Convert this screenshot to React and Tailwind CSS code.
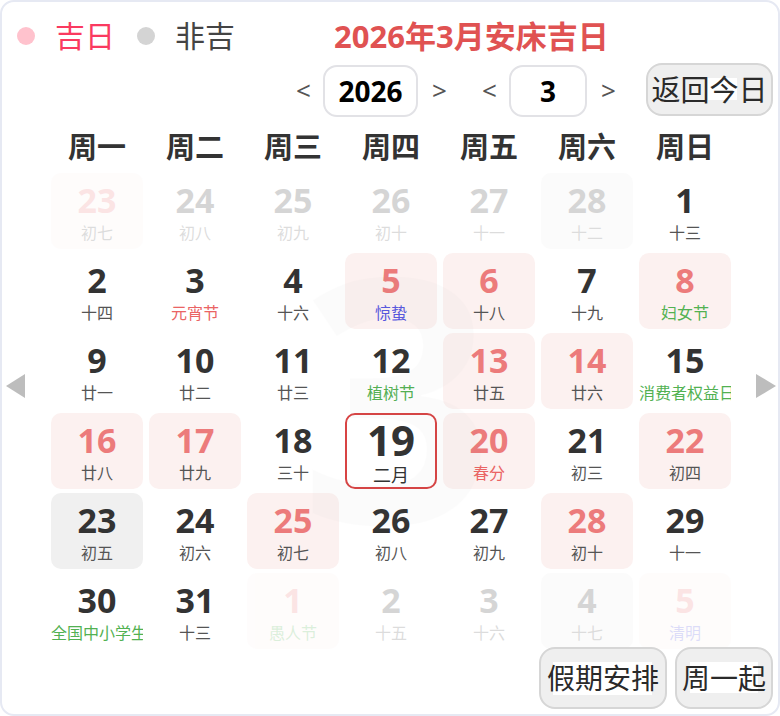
import React from "react";

const L = "lucky";
const G = "grey";

const rows = [
  [
    { d: 23, t: "初七", bg: L, o: true },
    { d: 24, t: "初八", o: true },
    { d: 25, t: "初九", o: true },
    { d: 26, t: "初十", o: true },
    { d: 27, t: "十一", o: true },
    { d: 28, t: "十二", bg: G, o: true },
    { d: 1, t: "十三" },
  ],
  [
    { d: 2, t: "十四" },
    { d: 3, t: "元宵节", c: "red" },
    { d: 4, t: "十六" },
    { d: 5, t: "惊蛰", c: "purple", bg: L },
    { d: 6, t: "十八", bg: L },
    { d: 7, t: "十九" },
    { d: 8, t: "妇女节", c: "green", bg: L },
  ],
  [
    { d: 9, t: "廿一" },
    { d: 10, t: "廿二" },
    { d: 11, t: "廿三" },
    { d: 12, t: "植树节", c: "green" },
    { d: 13, t: "廿五", bg: L },
    { d: 14, t: "廿六", bg: L },
    { d: 15, t: "消费者权益日", c: "green" },
  ],
  [
    { d: 16, t: "廿八", bg: L },
    { d: 17, t: "廿九", bg: L },
    { d: 18, t: "三十" },
    { d: 19, t: "二月", today: true },
    { d: 20, t: "春分", c: "red", bg: L },
    { d: 21, t: "初三" },
    { d: 22, t: "初四", bg: L },
  ],
  [
    { d: 23, t: "初五", bg: "sel" },
    { d: 24, t: "初六" },
    { d: 25, t: "初七", bg: L },
    { d: 26, t: "初八" },
    { d: 27, t: "初九" },
    { d: 28, t: "初十", bg: L },
    { d: 29, t: "十一" },
  ],
  [
    { d: 30, t: "全国中小学生安全教育日", c: "green" },
    { d: 31, t: "十三" },
    { d: 1, t: "愚人节", c: "green", bg: L, o: true },
    { d: 2, t: "十五", o: true },
    { d: 3, t: "十六", o: true },
    { d: 4, t: "十七", bg: G, o: true },
    { d: 5, t: "清明", c: "purple", bg: L, o: true },
  ],
];

const weekdays = ["周一", "周二", "周三", "周四", "周五", "周六", "周日"];

function Cell({ cell }) {
  const bgCls =
    cell.bg === L
      ? "bg-[#fcf1f0]"
      : cell.bg === G
      ? "bg-[#ececec]"
      : cell.bg === "sel"
      ? "bg-[#f0f0f0]"
      : "";
  const numCls = cell.bg === L ? "text-[#ec7b7b]" : "text-[#333333]";
  const lunarCls =
    cell.c === "green"
      ? "text-[#52b152]"
      : cell.c === "purple"
      ? "text-[#5757df]"
      : cell.c === "red"
      ? "text-[#ea6464]"
      : "text-[#555555]";

  if (cell.today) {
    return (
      <div className="h-[76px] rounded-[10px] border-2 border-[#d84444] flex flex-col items-center overflow-hidden">
        <div className="h-[44px] leading-[44px] mt-[3px] text-[42px] font-bold text-[#333333]">
          {cell.d}
        </div>
        <div className="h-[22px] leading-[22px] mt-[2px] text-[18px] text-[#333333]">
          {cell.t}
        </div>
      </div>
    );
  }

  return (
    <div
      className={`h-[76px] rounded-[10px] flex flex-col items-center overflow-hidden ${bgCls} ${
        cell.o ? "opacity-[0.2]" : ""
      }`}
    >
      <div className={`h-[36px] leading-[36px] mt-[9px] text-[34px] font-bold ${numCls}`}>
        {cell.d}
      </div>
      <div
        className={`w-full h-[20px] leading-[20px] mt-[5px] text-[16px] whitespace-nowrap overflow-hidden text-center ${lunarCls}`}
      >
        {cell.t}
      </div>
    </div>
  );
}

function GreyButton({ children, className, patch }) {
  return (
    <div
      className={`relative flex items-center justify-center bg-[#efefef] border-2 border-[#d6d6d6] rounded-[16px] text-[#2a2a2a] ${className}`}
    >
      <span className={`absolute bg-white ${patch}`} />
      <span className="relative">{children}</span>
    </div>
  );
}

export default function App() {
  return (
    <div
      className="w-[780px] h-[716px] bg-white relative overflow-hidden rounded-[14px] border-2 border-[#e6e9f3]"
      style={{ fontFamily: '"Noto Sans", "Noto Sans CJK SC", sans-serif' }}
    >
      <div className="relative flex flex-col">
        {/* legend + title */}
        <div className="flex items-center h-[40px] mt-[14px] pl-[15px]">
          <span className="w-[18px] h-[18px] rounded-full bg-[#ffc2cd]" />
          <span className="ml-[20px] text-[30px] leading-[40px] text-[#fa3a60]">吉日</span>
          <span className="ml-[22px] w-[18px] h-[18px] rounded-full bg-[#d4d4d4]" />
          <span className="ml-[20px] text-[30px] leading-[40px] text-[#444444]">非吉</span>
          <span className="ml-[99px] text-[31px] leading-[40px] font-bold text-[#e05252]">
            2026年3月安床吉日
          </span>
        </div>

        {/* year / month selector */}
        <div className="flex items-center h-[53px] mt-[7px] pl-[294px]">
          <span className="w-[14px] text-center text-[26px] text-[#555555] leading-none">&lt;</span>
          <div className="ml-[13px] w-[95px] h-[52px] mt-[3px] rounded-[14px] border-2 border-[#e2e2e6] flex items-center justify-center text-[28px] font-bold text-black">
            2026
          </div>
          <span className="ml-[14px] w-[14px] text-center text-[26px] text-[#555555] leading-none">&gt;</span>
          <span className="ml-[36px] w-[14px] text-center text-[26px] text-[#555555] leading-none">&lt;</span>
          <div className="ml-[13px] w-[78px] h-[52px] mt-[3px] rounded-[14px] border-2 border-[#e2e2e6] flex items-center justify-center text-[28px] font-bold text-black">
            3
          </div>
          <span className="ml-[14px] w-[14px] text-center text-[26px] text-[#555555] leading-none">&gt;</span>
          <GreyButton
            className="ml-[31px] w-[127px] h-[53px] text-[29px]"
            patch="left-[60px] right-[34px] top-[13px] bottom-[14px]"
          >
            返回今日
          </GreyButton>
        </div>

        {/* weekday header */}
        <div className="grid grid-cols-[repeat(7,92px)] gap-x-[6px] ml-[49px] mt-[11px] h-[40px]">
          {weekdays.map((w) => (
            <div key={w} className="text-center text-[29px] leading-[40px] font-bold text-[#333333]">
              {w}
            </div>
          ))}
        </div>

        {/* calendar grid */}
        <div className="grid grid-cols-[repeat(7,92px)] gap-x-[6px] gap-y-[4px] ml-[49px] mt-[6px]">
          {rows.flat().map((cell, i) => (
            <Cell key={i} cell={cell} />
          ))}
        </div>

        {/* bottom buttons */}
        <div className="flex justify-end gap-[8px] pr-[5px] mt-[-2px]">
          <GreyButton
            className="w-[128px] h-[62px] text-[28px]"
            patch="left-[12px] right-[13px] top-[13px] bottom-[12px]"
          >
            假期安排
          </GreyButton>
          <GreyButton
            className="w-[98px] h-[62px] text-[28px]"
            patch="left-[13px] right-[13px] top-[13px] bottom-[14px]"
          >
            周一起
          </GreyButton>
        </div>
      </div>

      {/* watermark */}
      <div className="absolute left-[300px] top-[180px] w-[190px] h-[420px] flex items-center justify-center pointer-events-none text-[340px] font-bold leading-none text-[#888888] opacity-[0.025]">
        3
      </div>

      {/* side arrows */}
      <svg className="absolute left-[3px] top-[371px]" width="22" height="26" viewBox="0 0 22 26">
        <polygon points="20,1 20,25 1,13" fill="#bdbdbd" />
      </svg>
      <svg className="absolute left-[753px] top-[371px]" width="22" height="26" viewBox="0 0 22 26">
        <polygon points="1,1 1,25 21,13" fill="#bdbdbd" />
      </svg>
    </div>
  );
}
